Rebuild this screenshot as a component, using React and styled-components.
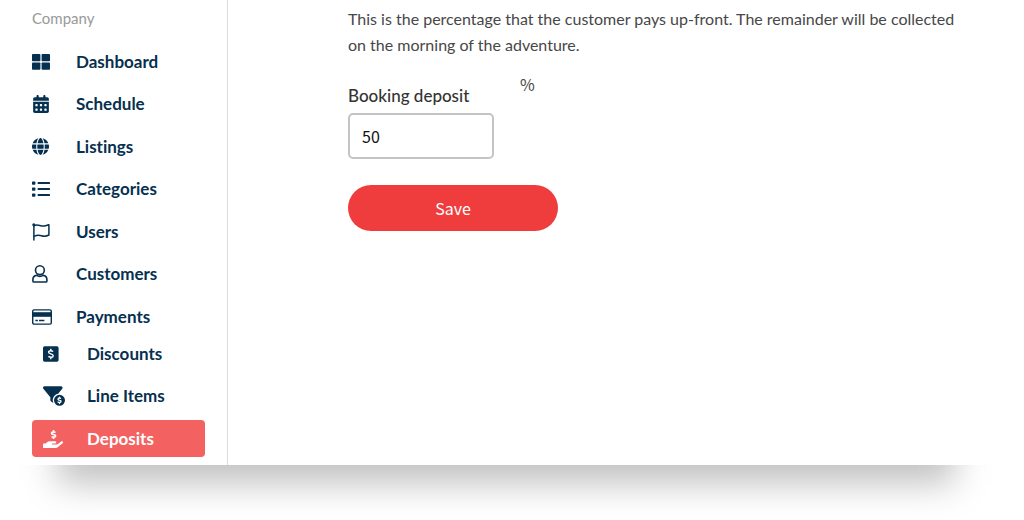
import React from "react";
import styled, { createGlobalStyle } from "styled-components";
import { FaCalendarDays, FaFilterCircleDollar, FaGlobe } from "react-icons/fa6";
import { FaHandHoldingUsd } from "react-icons/fa";

const GlobalStyle = createGlobalStyle`
  *, *::before, *::after { box-sizing: border-box; }
  body {
    margin: 0;
    background: #fff;
    color: #474747;
    font-family: Lato, "Liberation Sans", sans-serif;
    font-size: 17px;
    line-height: 26px;
    font-variant-ligatures: none;
  }
`;

const Shell = styled.div`
  display: flex;
  background: #fff;
`;

const Sidebar = styled.nav`
  flex: 0 0 228px;
  padding: 5px 22px 8px 32px;
  border-right: 1px solid #dcdcdc;
`;

const SectionTitle = styled.div`
  margin-bottom: 12px;
  color: #999;
  font-size: 15px;
`;

const NavList = styled.ul`
  display: flex;
  flex-direction: column;
  justify-content: space-between;
  min-height: ${(p) => (p.$nested ? 122 : 292)}px;
  margin: 0;
  padding: 0;
  list-style: none;
`;

const NavLink = styled.a`
  display: grid;
  grid-template-columns: 44px 1fr;
  align-items: center;
  height: 37px;
  padding-left: ${(p) => (p.$nested ? 11 : 0)}px;
  border-radius: 4px;
  background: ${(p) => (p.$active ? "#f36260" : "transparent")};
  color: ${(p) => (p.$active ? "#fff" : "#06304f")};
  font-weight: 700;
  text-decoration: none;
  white-space: nowrap;

  svg { display: block; }
`;

const Main = styled.main`
  flex: 1;
  min-width: 0;
  padding: 6px 48px 24px 120px;
`;

const Intro = styled.p`
  margin: 0 0 13px;
  font-size: 16px;
`;

const FieldRow = styled.div`
  display: flex;
  align-items: flex-start;
  gap: 26px;
  margin-bottom: 26px;
`;

const Field = styled.div`
  display: flex;
  flex-direction: column;
  gap: 4px;
  width: 146px;
  padding-top: 12px;
`;

const Label = styled.label`
  font-weight: 500;
  color: #333;
`;

const NumberInput = styled.input`
  width: 100%;
  height: 46px;
  padding: 0 12px;
  border: 2px solid #c4c4c4;
  border-radius: 5px;
  background: #fff;
  color: #111;
  font: 16px "Noto Sans CJK SC", sans-serif;
`;

const Unit = styled.span`
  font-family: "Noto Sans CJK SC", sans-serif;
  font-size: 16px;
`;

const SaveButton = styled.button`
  display: block;
  width: 210px;
  height: 46px;
  padding: 0;
  border: 0;
  border-radius: 23px;
  background: #ef3d3d;
  color: #fff;
  font: 16px "Noto Sans CJK SC", sans-serif;
  cursor: pointer;
`;

const ShadowStrip = styled.div`
  height: 55px;
  margin: 0 32px 0 20px;
  overflow: hidden;

  &::before {
    content: "";
    display: block;
    height: 120px;
    margin: -101px 37px 0;
    background: rgba(0, 0, 0, 0.24);
    filter: blur(17px);
  }
`;

const DashboardIcon = () => (
  <svg width="18" height="16" viewBox="0 0 18 16" fill="currentColor" aria-hidden="true">
    <rect x="0" y="0" width="8.4" height="7.3" rx="0.8" />
    <rect x="9.6" y="0" width="8.4" height="7.3" rx="0.8" />
    <rect x="0" y="8.5" width="8.4" height="7.3" rx="0.8" />
    <rect x="9.6" y="8.5" width="8.4" height="7.3" rx="0.8" />
  </svg>
);

const ListIcon = () => (
  <svg width="18" height="16" viewBox="0 0 18 16" fill="currentColor" aria-hidden="true">
    {[0.5, 6.5, 12.5].map((y) => (
      <g key={y}>
        <rect x="0" y={y} width="3.4" height="3.2" rx="0.7" />
        <rect x="5.6" y={y + 0.6} width="12.4" height="2" rx="0.6" />
      </g>
    ))}
  </svg>
);

const FlagIcon = () => (
  <svg width="18" height="18" viewBox="0 0 18 18" fill="none" stroke="currentColor" strokeWidth="1.5" strokeLinecap="round" strokeLinejoin="round" aria-hidden="true">
    <path d="M1.9 1.6V17" />
    <path d="M1.9 2.6C6 .6 8.5 3.8 12.6 3c1.8-.3 3-.8 4.3-1.3V12c-2.6 1.4-4.6 1.6-7.4.7-2.8-.9-4.8-.6-7.6.7" />
    <circle cx="1.8" cy="1.7" r="1.5" fill="currentColor" stroke="none" />
  </svg>
);

const UserIcon = () => (
  <svg width="16" height="18" viewBox="0 0 16 18" fill="none" stroke="currentColor" strokeWidth="1.6" strokeLinejoin="round" aria-hidden="true">
    <circle cx="7.9" cy="5.2" r="4.4" />
    <path d="M4.7 10.4C2.3 10.7.9 12.2.9 14.4v1.5c0 .7.4 1.1 1.1 1.1h11.8c.7 0 1.1-.4 1.1-1.1v-1.5c0-2.2-1.4-3.7-3.8-4-1 .7-2 1-3.2 1s-2.2-.3-3.2-1z" />
  </svg>
);

const CardIcon = () => (
  <svg width="20" height="16" viewBox="0 0 20 16" aria-hidden="true">
    <rect x="0.7" y="0.9" width="18.6" height="14.2" rx="1.4" fill="none" stroke="currentColor" strokeWidth="1.4" />
    <path d="M.7 3.2h18.6v4.6H.7z" fill="currentColor" />
    <path d="M3.4 11.5h2.5M7 11.5h5.4" stroke="currentColor" strokeWidth="1.5" />
  </svg>
);

const DollarSquareIcon = () => (
  <svg width="16" height="16" viewBox="0 0 16 16" aria-hidden="true">
    <rect x="0" y="0.3" width="15.6" height="15.4" rx="1.6" fill="currentColor" />
    <path d="M7.8 2.8v2M7.8 11.2v2M10.2 5.5C9 4.8 5.6 4.1 5.6 6.2c0 2 4.6 1.4 4.6 3.5 0 2.2-3.4 1.7-4.8.7" fill="none" stroke="#fff" strokeWidth="1.4" />
  </svg>
);

const mainItems = [
  { label: "Dashboard", icon: <DashboardIcon /> },
  { label: "Schedule", icon: <FaCalendarDays size={18} /> },
  { label: "Listings", icon: <FaGlobe size={17} /> },
  { label: "Categories", icon: <ListIcon /> },
  { label: "Users", icon: <FlagIcon /> },
  { label: "Customers", icon: <UserIcon /> },
  { label: "Payments", icon: <CardIcon /> },
];

const paymentItems = [
  { label: "Discounts", icon: <DollarSquareIcon /> },
  { label: "Line Items", icon: <FaFilterCircleDollar size={22} /> },
  { label: "Deposits", icon: <FaHandHoldingUsd size={20} />, active: true },
];

const NavItems = ({ items, nested }) => (
  <NavList $nested={nested}>
    {items.map(({ label, icon, active }) => (
      <li key={label}>
        <NavLink href="#" $nested={nested} $active={active} aria-current={active ? "page" : undefined}>
          {icon}
          <span>{label}</span>
        </NavLink>
      </li>
    ))}
  </NavList>
);

export default function App() {
  return (
    <>
      <GlobalStyle />
      <Shell>
        <Sidebar>
          <SectionTitle>Company</SectionTitle>
          <NavItems items={mainItems} />
          <NavItems items={paymentItems} nested />
        </Sidebar>
        <Main>
          <Intro>
            This is the percentage that the customer pays up-front. The remainder will be collected on the morning of
            the adventure.
          </Intro>
          <FieldRow>
            <Field>
              <Label htmlFor="deposit">Booking deposit</Label>
              <NumberInput id="deposit" type="text" inputMode="numeric" defaultValue="50" />
            </Field>
            <Unit>%</Unit>
          </FieldRow>
          <SaveButton type="button">Save</SaveButton>
        </Main>
      </Shell>
      <ShadowStrip />
    </>
  );
}
